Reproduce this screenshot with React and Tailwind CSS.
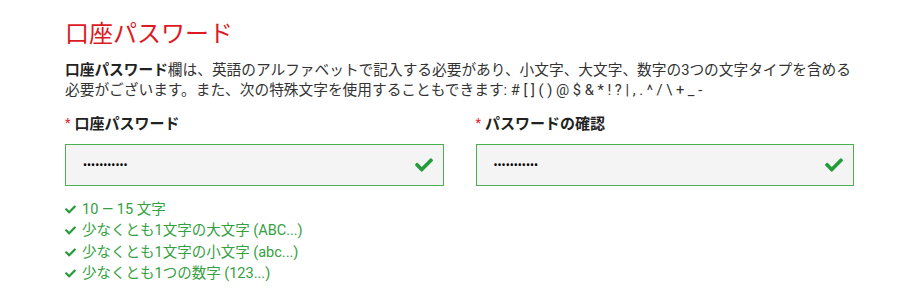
import React from "react";
import { FaCheck } from "react-icons/fa";

const rules = [
  "10 — 15 文字",
  "少なくとも1文字の大文字 (ABC...)",
  "少なくとも1文字の小文字 (abc...)",
  "少なくとも1つの数字 (123...)",
];

const PasswordField = ({ label, id }) => {
  return (
    <div>
      <label htmlFor={id} className="flex items-center text-[15px] leading-5 font-bold text-[#222]">
        <span className="text-[#e0303a] text-[12px] mr-[4px] -mt-[2px]">*</span>
        {label}
      </label>
      <div className="relative mt-[10px]">
        <input
          id={id}
          type="password"
          readOnly
          value="aaaaaaaaaaa"
          className="w-full h-[42px] bg-[#f4f4f4] border border-[#4cb050] pl-[17px] pr-10 text-[12px] text-black focus:outline-none"
        />
        {/* valid mark */}
        <FaCheck className="absolute right-[11px] top-1/2 -translate-y-1/2 text-[#259c3a]" size={18} />
      </div>
    </div>
  );
};

export default function App() {
  return (
    <div
      className="w-[900px] h-[307px] bg-white overflow-hidden"
      style={{ fontFamily: 'Roboto, "Noto Sans CJK JP", sans-serif' }}
    >
      <div className="ml-[65px] w-[789px] pt-[18px]">
        {/* Heading */}
        <h2 className="text-[24px] leading-8 text-[#dc1a24] font-normal">口座パスワード</h2>

        {/* Description */}
        <p className="mt-[10px] text-[14.7px] leading-5 text-[#333] whitespace-nowrap">
          <span className="font-bold text-[#222]">口座パスワード</span>
          欄は、英語のアルファベットで記入する必要があり、小文字、大文字、数字の3つの文字タイプを含める
          <br />
          必要がございます。また、次の特殊文字を使用することもできます: # [ ] ( ) @ $ &amp; * ! ? | , . ^ / \ + _ -
        </p>

        {/* Fields */}
        <div className="grid grid-cols-2 gap-8 mt-[14px]">
          <PasswordField label="口座パスワード" id="pw" />
          <PasswordField label="パスワードの確認" id="pw-confirm" />
        </div>

        {/* Rules */}
        <ul className="mt-[13px]">
          {rules.map((rule, index) => (
            <li key={index} className="flex items-center text-[14.5px] leading-[21.3px] text-[#34a040]">
              <FaCheck className="mr-[6px] text-[#259c3a]" size={11} />
              {rule}
            </li>
          ))}
        </ul>
      </div>
    </div>
  );
}
